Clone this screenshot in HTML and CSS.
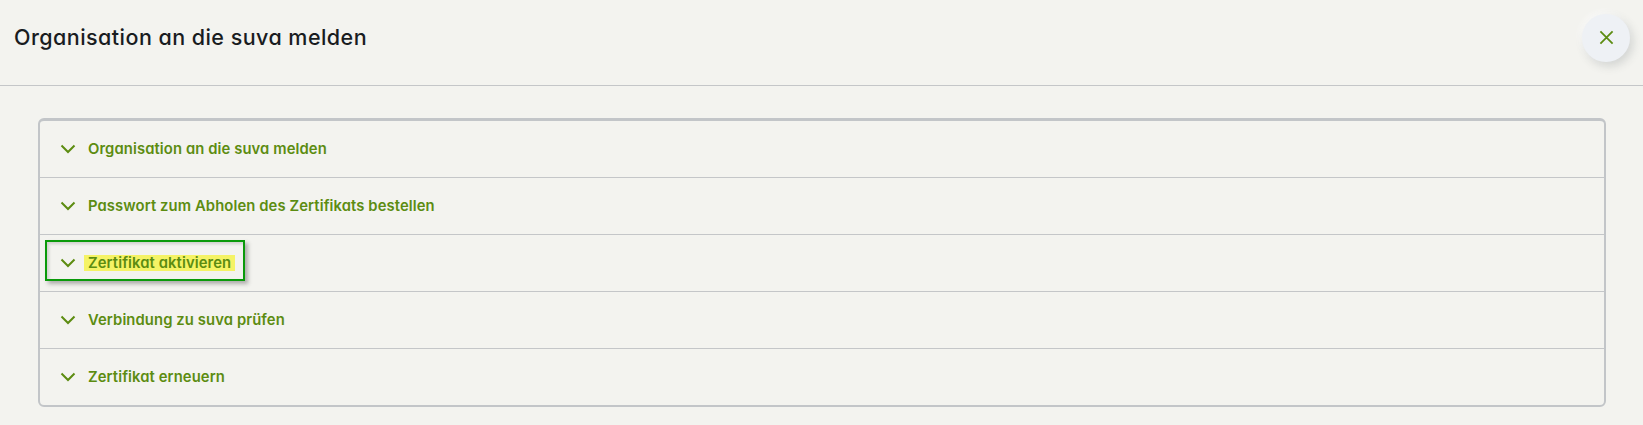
FILE: index.html
```html
<!DOCTYPE html>
<html lang="de">
<head>
<meta charset="utf-8">
<title>Organisation an die suva melden</title>
<link rel="stylesheet" href="styles.css">
</head>
<body>
<header class="header">
  <h1 class="title">Organisation an die suva melden</h1>
  <button class="close" aria-label="Schliessen">
    <svg class="close-icon" viewBox="0 0 16 16"><path d="M1.5 1.5 14.5 14.5M14.5 1.5 1.5 14.5"/></svg>
  </button>
</header>
<main class="content">
  <div class="accordion">
    <div class="row">
      <svg class="chevron" viewBox="0 0 16 10"><path d="M1.5 1.5 8 8 14.500 1.500"/></svg>
      <span class="label">Organisation an die suva melden</span>
    </div>
    <div class="row">
      <svg class="chevron" viewBox="0 0 16 10"><path d="M1.5 1.5 8 8 14.500 1.500"/></svg>
      <span class="label">Passwort zum Abholen des Zertifikats bestellen</span>
    </div>
    <div class="row">
      <svg class="chevron" viewBox="0 0 16 10"><path d="M1.5 1.5 8 8 14.500 1.500"/></svg>
      <span class="label marked">Zertifikat aktivieren</span>
      <span class="callout"></span>
    </div>
    <div class="row">
      <svg class="chevron" viewBox="0 0 16 10"><path d="M1.5 1.5 8 8 14.500 1.500"/></svg>
      <span class="label">Verbindung zu suva prüfen</span>
    </div>
    <div class="row">
      <svg class="chevron" viewBox="0 0 16 10"><path d="M1.5 1.5 8 8 14.500 1.500"/></svg>
      <span class="label">Zertifikat erneuern</span>
    </div>
  </div>
</main>
</body>
</html>
```
FILE: styles.css
```css
* { box-sizing: border-box; }
html, body { margin: 0; height: 100%; }
body {
  background: #f3f3ef;
  font-family: Inter, "Noto Sans", sans-serif;
  font-feature-settings: "cv11" 1;
  overflow: hidden;
}
.header {
  height: 86px;
  display: flex;
  align-items: center;
  justify-content: space-between;
  padding: 0 13px 12px 14px;
  border-bottom: 1px solid #c4c6c8;
}
.title {
  margin: 0;
  font-size: 21.5px;
  font-weight: 500;
  letter-spacing: 0.45px;
  color: #191c1f;
}
.close {
  width: 48px;
  height: 48px;
  margin-top: 2px;
  padding: 0;
  border: 0;
  border-radius: 50%;
  background: #eef1f5;
  box-shadow: 3px 4px 10px rgba(60, 70, 80, 0.18), -2px -2px 6px rgba(255, 255, 255, 0.7);
  display: flex;
  align-items: center;
  justify-content: center;
}
.close-icon { width: 15px; height: 15px; }
.close-icon path { fill: none; stroke: #5c8c11; stroke-width: 1.9; }
.content { padding: 32px 37px 0 38px; }
.accordion {
  border: 2px solid #c2c5c8;
  border-top-width: 3px;
  border-radius: 6px;
}
.row {
  position: relative;
  height: 57px;
  display: flex;
  align-items: center;
  padding: 0 0 1px 20px;
  border-bottom: 1px solid #c4c6c8;
}
.row:last-child { height: 56px; border-bottom: 0; }
.chevron { width: 16px; height: 10px; flex: none; margin-right: 12px; }
.chevron path { fill: none; stroke: #5c8c11; stroke-width: 2; }
.label {
  font-size: 14.8px;
  font-weight: 600;
  line-height: 16px;
  letter-spacing: 0.1px;
  color: #5c8c11;
}
.marked {
  margin-left: -4px;
  padding: 0 4px;
  background: #f5f365;
}
.callout {
  position: absolute;
  left: 5px;
  top: 5px;
  width: 200px;
  height: 41px;
  border: 2px solid #0a9a0a;
  box-shadow: 3px 3px 4px rgba(70, 70, 70, 0.4), inset 2px 2px 3px rgba(70, 70, 70, 0.2);
  pointer-events: none;
}
```
